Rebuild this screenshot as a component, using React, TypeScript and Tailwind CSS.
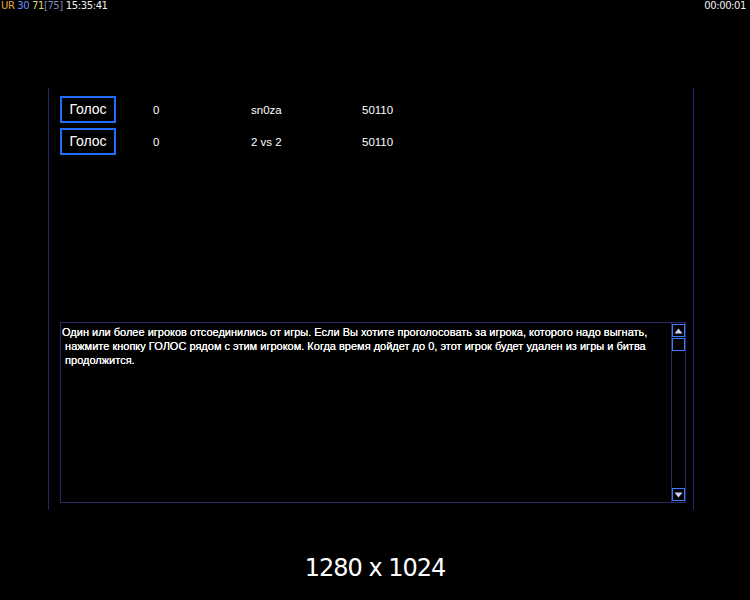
import React from "react";

const rows = [
  { votes: "0", name: "sn0za", id: "50110" },
  { votes: "0", name: "2 vs 2", id: "50110" },
];

function ScrollButton({ down }: { down?: boolean }) {
  return (
    <div className="w-[13px] h-[13px] border border-[#3a7bff] flex items-center justify-center">
      <svg width="9" height="6" viewBox="0 0 9 6">
        {down ? (
          <polygon points="0.5,0.5 8.5,0.5 4.5,5.5" fill="#c8d0ff" />
        ) : (
          <polygon points="0.5,5.5 8.5,5.5 4.5,0.5" fill="#c8d0ff" />
        )}
      </svg>
    </div>
  );
}

export default function App() {
  return (
    <div
      className="w-[750px] h-[600px] bg-black text-white flex flex-col overflow-hidden"
      style={{ fontFamily: '"Liberation Sans", Arial, sans-serif' }}
    >
      {/* status bar */}
      <div
        className="h-[12px] flex justify-between items-center px-[1px] text-[10px] leading-none"
        style={{ fontFamily: '"DejaVu Sans", Tahoma, sans-serif', letterSpacing: "-0.4px" }}
      >
        <div className="flex gap-[3px]">
          <span>
            <span className="text-[#e8a838]">UR</span>{" "}
            <span className="text-[#6f8cff]">30</span>{" "}
            <span className="text-[#e6d27a]">71</span>
            <span className="text-[#7d86b0]">[75]</span>
          </span>
          <span className="text-[#f0f0f0]">15:35:41</span>
        </div>
        <span className="text-[#f0f0f0] pr-[3px]">00:00:01</span>
      </div>

      {/* vote panel */}
      <div className="ml-[48px] mt-[76px] w-[646px] h-[422px] border-l border-r border-[#24246a] flex flex-col pl-[11px] pr-[7px] pt-[8px]">
        <div className="flex flex-col gap-[5px]">
          {rows.map((r, i) => (
            <div key={i} className="flex items-center text-[11.5px]">
              <button className="w-[56px] h-[27px] border-2 border-[#1f6cff] text-[14px] text-white flex items-center justify-center">
                Голос
              </button>
              <span className="ml-[37px] w-[98px] pt-[2px]">{r.votes}</span>
              <span className="w-[111px] pt-[2px]">{r.name}</span>
              <span className="pt-[2px]">{r.id}</span>
            </div>
          ))}
        </div>

        {/* message box */}
        <div className="mt-[167px] h-[181px] border border-[#2a2a66] flex">
          <div className="flex-1 min-w-0 overflow-hidden pl-[1px] pt-[2px] text-[11px] leading-[14px] whitespace-pre text-white [text-shadow:0_0_0.4px_#fff]">
            {"Один или более игроков отсоединились от игры. Если Вы хотите проголосовать за игрока, которого надо выгнать,\n нажмите кнопку ГОЛОС рядом с этим игроком. Когда время дойдет до 0, этот игрок будет удален из игры и битва\n продолжится."}
          </div>
          <div className="w-[14px] shrink-0 border-l border-[#2a2a66] flex flex-col items-center pt-[1px] pb-[1px]">
            <ScrollButton />
            <div className="w-[13px] h-[13px] border border-[#3a7bff] mt-[1px]" />
            <div className="flex-1" />
            <ScrollButton down />
          </div>
        </div>
      </div>

      {/* resolution label */}
      <div className="flex-1 flex items-center justify-center pt-[26px]">
        <span className="text-[24px] text-white" style={{ fontFamily: '"DejaVu Sans", Tahoma, sans-serif', letterSpacing: "-1px" }}>
          1280 x 1024
        </span>
      </div>
    </div>
  );
}
